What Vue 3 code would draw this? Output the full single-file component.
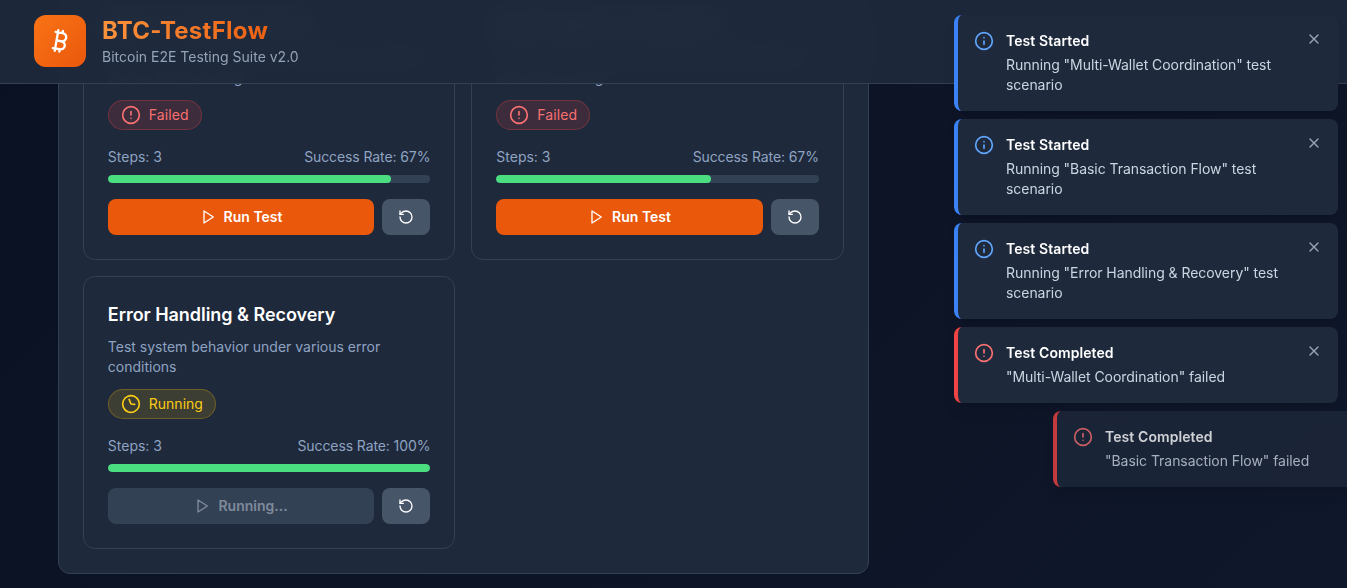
<template>
  <div class="page">
    <header class="topbar">
      <div class="logo">
        <svg width="28" height="28" viewBox="0 0 24 24" fill="none" stroke="#fff" stroke-width="2" stroke-linecap="round" stroke-linejoin="round">
          <path d="M11.767 19.089c4.924.868 6.14-6.025 1.216-6.894m-1.216 6.894L5.86 18.047m5.908 1.042-.347 1.97m1.563-8.864c4.924.869 6.14-6.025 1.215-6.893m-1.215 6.893-3.94-.694m5.155-6.2L8.29 4.26m5.908 1.042.348-1.97M7.48 20.364l3.126-17.727" />
        </svg>
      </div>
      <div>
        <h1 class="brand">BTC-TestFlow</h1>
        <p class="tagline">Bitcoin E2E Testing Suite v2.0</p>
      </div>
    </header>

    <main class="content">
      <section class="panel">
        <article v-for="t in tests" :key="t.name" class="card">
          <h3 class="card-title">{{ t.name }}</h3>
          <p class="card-desc">{{ t.desc }}</p>
          <span class="badge" :class="t.running ? 'badge-running' : 'badge-failed'">
            <svg v-if="t.running" class="ico clock" viewBox="0 0 24 24">
              <circle cx="12" cy="12" r="10" />
              <polyline points="12 6 12 12 16 14" />
            </svg>
            <svg v-else class="ico" viewBox="0 0 24 24">
              <circle cx="12" cy="12" r="10" />
              <line x1="12" y1="8" x2="12" y2="12" />
              <line x1="12" y1="16" x2="12.01" y2="16" />
            </svg>
            {{ t.running ? 'Running' : 'Failed' }}
          </span>
          <div class="stats">
            <span>Steps: 3</span>
            <span class="rate">Success Rate: {{ t.rate }}%</span>
          </div>
          <div class="track">
            <div class="fill" :style="{ width: t.progress + '%' }"></div>
          </div>
          <div class="actions">
            <button class="run" :class="{ 'run-busy': t.running }">
              <svg class="ico-sm" viewBox="0 0 24 24"><polygon points="6 3 20 12 6 21 6 3" /></svg>
              {{ t.running ? 'Running...' : 'Run Test' }}
            </button>
            <button class="reset">
              <svg class="ico-sm" viewBox="0 0 24 24">
                <path d="M3 12a9 9 0 1 0 9-9 9.75 9.75 0 0 0-6.74 2.74L3 8" />
                <path d="M3 3v5h5" />
              </svg>
            </button>
          </div>
        </article>
      </section>
    </main>

    <aside class="toasts">
      <div v-for="(n, i) in toasts" :key="i" class="toast" :class="[n.type, { entering: n.entering }]">
        <svg class="ico toast-ico" viewBox="0 0 24 24">
          <circle cx="12" cy="12" r="10" />
          <template v-if="n.type === 'info'">
            <line x1="12" y1="16" x2="12" y2="12" />
            <line x1="12" y1="8" x2="12.01" y2="8" />
          </template>
          <template v-else>
            <line x1="12" y1="8" x2="12" y2="12" />
            <line x1="12" y1="16" x2="12.01" y2="16" />
          </template>
        </svg>
        <div class="toast-body">
          <div class="toast-title">{{ n.title }}</div>
          <div class="toast-msg">{{ n.msg }}</div>
        </div>
        <svg v-if="!n.entering" class="close" viewBox="0 0 24 24">
          <path d="M18 6 6 18" />
          <path d="m6 6 12 12" />
        </svg>
      </div>
    </aside>
  </div>
</template>

<script setup>
const tests = [
  { name: 'Basic Transaction Flow', desc: 'Test standard Bitcoin send, receive and confirm transaction handling', rate: 67, progress: 87.7 },
  { name: 'Multi-Wallet Coordination', desc: 'Coordinate transfers across several nodes and wallet balancing', rate: 67, progress: 66.7 },
  { name: 'Error Handling & Recovery', desc: 'Test system behavior under various error conditions', rate: 100, progress: 100, running: true }
]

const toasts = [
  { type: 'info', title: 'Test Started', msg: 'Running "Multi-Wallet Coordination" test scenario' },
  { type: 'info', title: 'Test Started', msg: 'Running "Basic Transaction Flow" test scenario' },
  { type: 'info', title: 'Test Started', msg: 'Running "Error Handling & Recovery" test scenario' },
  { type: 'error', title: 'Test Completed', msg: '"Multi-Wallet Coordination" failed' },
  { type: 'error', title: 'Test Completed', msg: '"Basic Transaction Flow" failed', entering: true }
]
</script>

<style>
html, body {
  margin: 0;
  height: 100%;
  overflow: hidden;
  background: #0f172a;
}
</style>

<style scoped>
.page {
  height: 588px;
  overflow: hidden;
  display: flex;
  flex-direction: column;
  justify-content: flex-end;
  background: linear-gradient(135deg, #0a1122 0%, #0f172a 100%);
  font-family: Inter, "Liberation Sans", sans-serif;
  color: #fff;
}

.topbar {
  position: fixed;
  top: 0;
  left: 0;
  right: 0;
  z-index: 10;
  height: 84px;
  box-sizing: border-box;
  padding: 15px 34px;
  display: flex;
  gap: 16px;
  background: rgba(30, 41, 59, 0.95);
  backdrop-filter: blur(12px);
  border-bottom: 1px solid #334155;
}

.logo {
  width: 52px;
  height: 52px;
  border-radius: 12px;
  display: flex;
  align-items: center;
  justify-content: center;
  background: linear-gradient(135deg, #f97316, #ea580c);
}

.brand {
  margin: 0;
  font-size: 24px;
  line-height: 32px;
  font-weight: 700;
  letter-spacing: 0.25px;
  background: linear-gradient(90deg, #fb923c, #ea580c);
  -webkit-background-clip: text;
  background-clip: text;
  color: transparent;
}

.tagline {
  margin: 0;
  font-size: 14px;
  line-height: 20px;
  color: #94a3b8;
}

.content {
  flex-shrink: 0;
  padding: 0 0 14px 57.8px;
}

.panel {
  width: 811px;
  box-sizing: border-box;
  padding: 24px;
  display: grid;
  grid-template-columns: 1fr 1fr;
  gap: 16px;
  background: #1e293b;
  border: 1px solid #334155;
  border-radius: 12px;
}

.card {
  padding: 24px;
  background: #1e293b;
  border: 1px solid #334155;
  border-radius: 12px;
}

.card-title {
  margin: 0 0 8px;
  font-size: 18px;
  line-height: 28px;
  font-weight: 600;
  letter-spacing: -0.04px;
  color: #fff;
}

.card-desc {
  margin: 0 0 12px;
  font-size: 14px;
  line-height: 20px;
  color: #8fa3c2;
}

.badge {
  display: inline-flex;
  align-items: center;
  gap: 8px;
  height: 30px;
  box-sizing: border-box;
  padding: 0 12px;
  border-radius: 999px;
  border: 1px solid;
  font-size: 14px;
  line-height: 20px;
}

.badge-failed {
  color: #f87171;
  background: rgba(239, 68, 68, 0.15);
  border-color: rgba(239, 68, 68, 0.3);
  letter-spacing: 0.1px;
}

.badge-running {
  color: #facc15;
  background: rgba(234, 179, 8, 0.15);
  border-color: rgba(234, 179, 8, 0.3);
}

.ico,
.ico-sm,
.close {
  fill: none;
  stroke: currentColor;
  stroke-width: 2;
  stroke-linecap: round;
  stroke-linejoin: round;
  flex-shrink: 0;
}

.ico {
  width: 20px;
  height: 20px;
}

.ico-sm {
  width: 16px;
  height: 16px;
}

.clock {
  transform: rotate(-22deg);
}

.stats {
  margin-top: 17px;
  display: flex;
  justify-content: space-between;
  font-size: 14px;
  line-height: 20px;
  color: #8fa3c2;
}

.rate {
  letter-spacing: -0.1px;
}

.track {
  margin-top: 8px;
  height: 8px;
  border-radius: 999px;
  background: #334155;
  overflow: hidden;
}

.fill {
  height: 100%;
  border-radius: 999px;
  background: #4ade80;
}

.actions {
  margin-top: 16px;
  display: flex;
  gap: 8px;
}

.actions button {
  height: 36px;
  border: none;
  border-radius: 8px;
  display: flex;
  align-items: center;
  justify-content: center;
  font-family: inherit;
  color: #fff;
}

.run {
  flex: 1;
  gap: 8px;
  background: #ea580c;
  font-size: 14px;
  line-height: 20px;
  font-weight: 600;
}

.actions .run-busy {
  background: #334155;
  color: #7f8a9b;
}

.reset {
  width: 48px;
  padding: 0;
  background: #475569;
}

.toasts {
  position: fixed;
  top: 15px;
  left: 954px;
  z-index: 20;
  width: 384px;
  display: flex;
  flex-direction: column;
  gap: 8px;
}

.toast {
  box-sizing: border-box;
  width: 384px;
  padding: 16px;
  display: flex;
  gap: 12px;
  background: #1e293b;
  border-left: 4px solid;
  border-radius: 8px;
  box-shadow: 0 10px 15px -3px rgba(0, 0, 0, 0.1), 0 4px 6px -4px rgba(0, 0, 0, 0.1);
}

.toast.info {
  border-color: #3b82f6;
}

.toast.error {
  border-color: #ef4444;
}

.toast.entering {
  transform: translateX(99px);
  opacity: 0.8;
}

.info .toast-ico {
  color: #60a5fa;
}

.error .toast-ico {
  color: #f87171;
}

.toast-body {
  flex: 1;
  min-width: 0;
}

.toast-title {
  font-size: 14px;
  line-height: 20px;
  font-weight: 600;
  letter-spacing: 0.08px;
  color: #fff;
}

.toast-msg {
  margin-top: 4px;
  font-size: 14px;
  line-height: 20px;
  letter-spacing: -0.05px;
  color: #cbd5e1;
}

.close {
  width: 16px;
  height: 16px;
  color: #94a3b8;
}
</style>
